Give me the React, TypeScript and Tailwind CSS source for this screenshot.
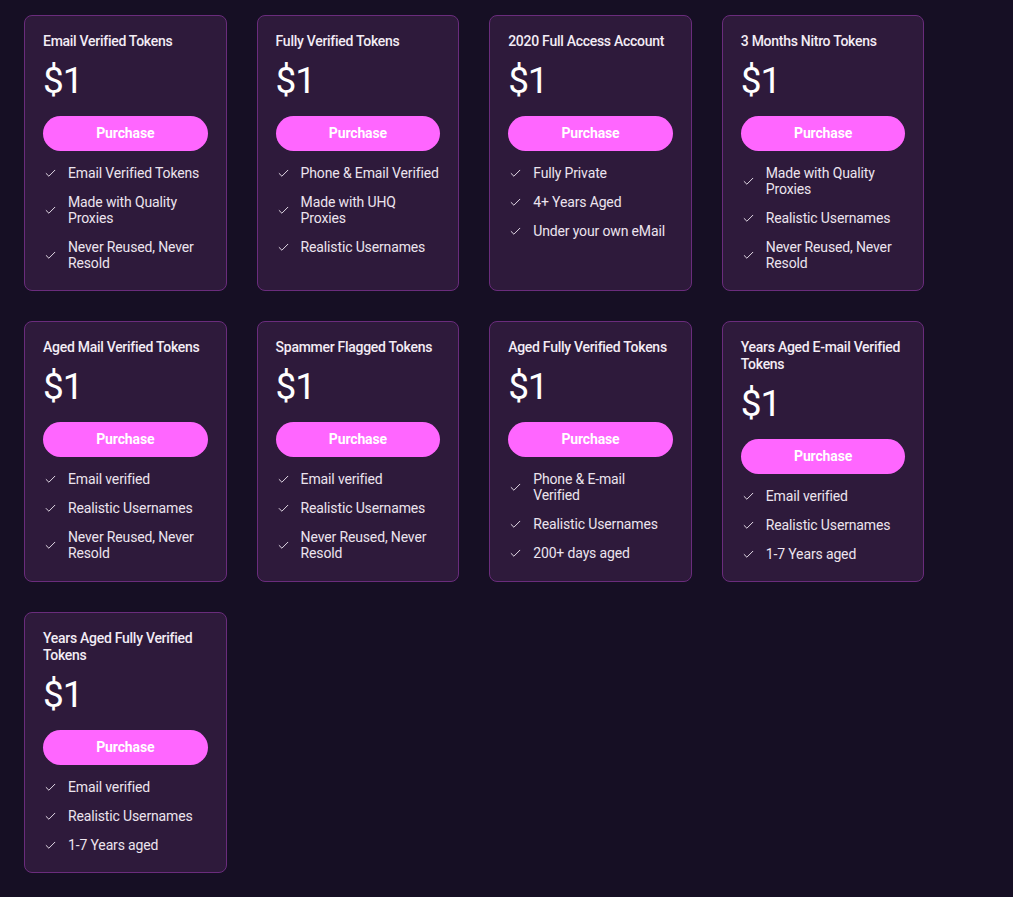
import { Check } from 'lucide-react';

type Plan = { title: string; features: string[] };

const plans: Plan[] = [
  { title: 'Email Verified Tokens', features: ['Email Verified Tokens', 'Made with Quality Proxies', 'Never Reused, Never Resold'] },
  { title: 'Fully Verified Tokens', features: ['Phone & Email Verified', 'Made with UHQ Proxies', 'Realistic Usernames'] },
  { title: '2020 Full Access Account', features: ['Fully Private', '4+ Years Aged', 'Under your own eMail'] },
  { title: '3 Months Nitro Tokens', features: ['Made with Quality Proxies', 'Realistic Usernames', 'Never Reused, Never Resold'] },
  { title: 'Aged Mail Verified Tokens', features: ['Email verified', 'Realistic Usernames', 'Never Reused, Never Resold'] },
  { title: 'Spammer Flagged Tokens', features: ['Email verified', 'Realistic Usernames', 'Never Reused, Never Resold'] },
  { title: 'Aged Fully Verified Tokens', features: ['Phone & E-mail Verified', 'Realistic Usernames', '200+ days aged'] },
  { title: 'Years Aged E-mail Verified Tokens', features: ['Email verified', 'Realistic Usernames', '1-7 Years aged'] },
  { title: 'Years Aged Fully Verified Tokens', features: ['Email verified', 'Realistic Usernames', '1-7 Years aged'] },
];

function PlanCard({ plan }: { plan: Plan }) {
  return (
    <div className="flex flex-col rounded-lg border border-[#6a2c7c] bg-[#2e1a3b] px-[18px] pt-[17px] pb-[19px]">
      <h3 className="text-[14px] leading-[17px] font-medium tracking-[-0.02em] text-[#f3ecf5]">{plan.title}</h3>
      <p className="mt-[11px] text-[37px] leading-[40px] font-normal tracking-[-0.03em] text-white">$1</p>
      <button className="mt-[15px] h-[35px] w-full rounded-full bg-[#ff66ff] text-[14px] font-bold tracking-[-0.01em] text-white">
        Purchase
      </button>
      <ul className="mt-[14px] flex flex-col gap-[13px] pl-[1px]">
        {plan.features.map((f) => (
          <li key={f} className="flex items-center gap-[11px]">
            <Check className="h-[13px] w-[13px] shrink-0 text-[#ece4ee]" strokeWidth={1.75} />
            <span className="text-[14px] leading-[16px] tracking-[-0.01em] text-[#ece4ee]">{f}</span>
          </li>
        ))}
      </ul>
    </div>
  );
}

export default function App() {
  return (
    <div className="min-h-screen bg-[#160f24] pl-[24px] pt-[15px] pb-[24px]" style={{ fontFamily: 'Roboto, "Noto Sans", sans-serif' }}>
      <div className="grid grid-cols-[repeat(4,202.6px)] gap-x-[30px] gap-y-[30px]">
        {plans.map((p) => (
          <PlanCard key={p.title} plan={p} />
        ))}
      </div>
    </div>
  );
}
